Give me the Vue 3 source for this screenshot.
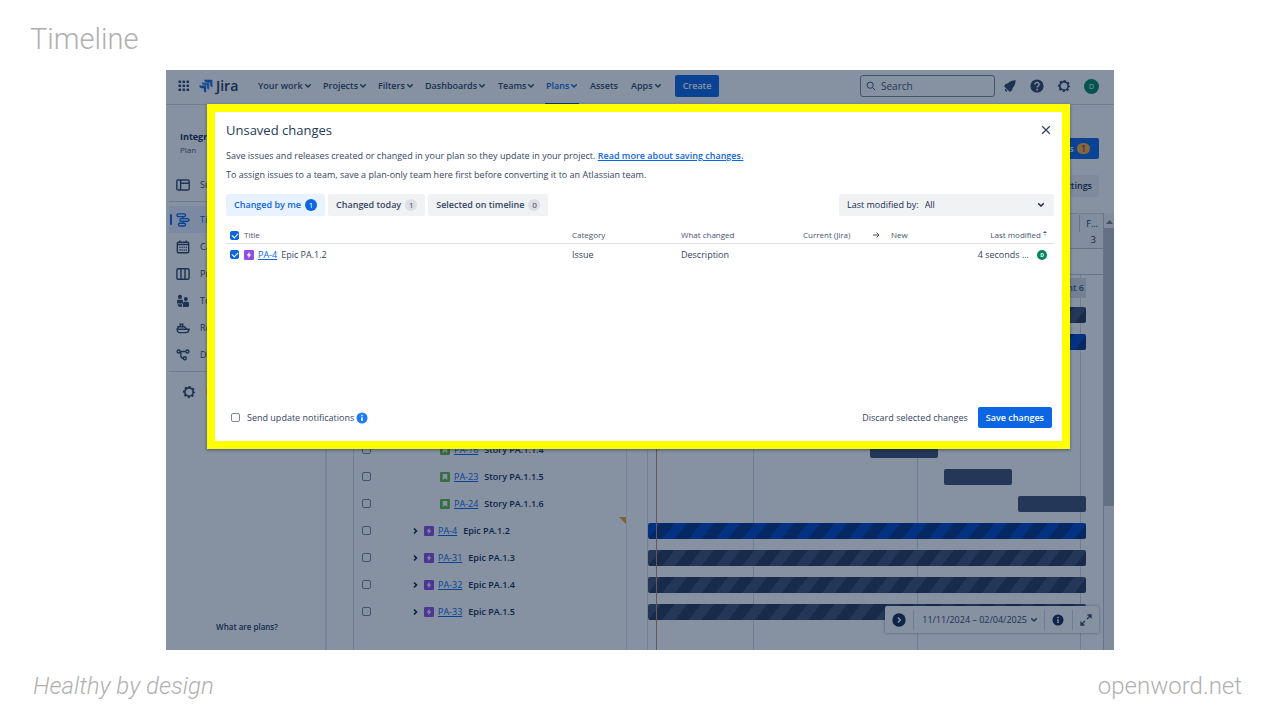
<script setup>
import { ref } from 'vue'

const nav = ['Your work', 'Projects', 'Filters', 'Dashboards', 'Teams', 'Plans', 'Assets', 'Apps']
const side = [
  { name: 'Timeline', icon: 'timeline', active: true },
  { name: 'Calendar', icon: 'calendar' },
  { name: 'Program', icon: 'board' },
  { name: 'Teams', icon: 'teams' },
  { name: 'Releases', icon: 'ship' },
  { name: 'Dependencies', icon: 'deps' },
]
const issues = [
  { type: 'story', key: 'PA-16', title: 'Story PA.1.1.4' },
  { type: 'story', key: 'PA-23', title: 'Story PA.1.1.5' },
  { type: 'story', key: 'PA-24', title: 'Story PA.1.1.6' },
  { type: 'epic', key: 'PA-4', title: 'Epic PA.1.2', changed: true },
  { type: 'epic', key: 'PA-31', title: 'Epic PA.1.3' },
  { type: 'epic', key: 'PA-32', title: 'Epic PA.1.4' },
  { type: 'epic', key: 'PA-33', title: 'Epic PA.1.5' },
]
const bars = [
  { start: 0, span: 438, look: 'grey striped' },
  { start: 0, span: 438, look: 'blue striped' },
  null, null, null,
  { start: 222, span: 68, look: 'grey' },
  { start: 296, span: 68, look: 'grey' },
  { start: 370, span: 68, look: 'grey' },
  { start: 0, span: 438, look: 'blue striped' },
  { start: 0, span: 438, look: 'grey striped' },
  { start: 0, span: 438, look: 'grey striped' },
  { start: 0, span: 438, look: 'grey striped' },
]
const pct = (n) => (n / 438) * 100 + '%'
const lines = [105, 269, 432]
const tabs = [
  { label: 'Changed by me', count: 1 },
  { label: 'Changed today', count: 1 },
  { label: 'Selected on timeline', count: 0 },
]
const tab = ref(0)
const all = ref(true)
const row = ref(true)
const notify = ref(false)
</script>

<template>
  <div class="slide">
    <h1 class="slide-title">Timeline</h1>

    <div class="screen">
      <header class="topbar">
        <button class="bare apps" aria-label="Switch apps">
          <svg width="12" height="12" viewBox="0 0 12 12" fill="#344563">
            <template v-for="y in 3" :key="y"><rect v-for="x in 3" :key="x" :x="x * 4 - 3.5" :y="y * 4 - 3.5" width="2.6" height="2.6" rx=".6" /></template>
          </svg>
        </button>
        <a href="#" class="logo">
          <svg width="14" height="14" viewBox="0 0 14 14" fill="#1868db">
            <path d="M5 .8H13.400V8.300C11.800 8 11.200 7 11.200 5.600V3.600H9.200C6.800 3.500 5.600 2.600 5 .8Z" />
            <path d="M2.600 3.600H10.300V10.600C8.700 10.200 7.900 9.200 7.900 7.900V6.300H6.100C4.200 6.200 3 5.300 2.600 3.600Z" opacity=".85" />
            <path d="M.1 6.500H7.200V13.500C5.400 13.200 4.800 12.200 4.800 10.900V9.200H2.900C1.300 9.100 .3 8.100 .1 6.500Z" />
          </svg>
          <span>Jira</span>
        </a>
        <nav class="nav">
          <a v-for="n in nav" :key="n" href="#" :class="{ current: n === 'Plans' }">
            {{ n }}<svg v-if="n !== 'Assets'" width="6" height="4" viewBox="0 0 6 4"><path d="M.7.7 3 3 5.300.7" fill="none" stroke="currentColor" stroke-width="1.400" stroke-linecap="round" /></svg>
          </a>
        </nav>
        <button class="create">Create</button>
        <label class="search">
          <svg width="10" height="10" viewBox="0 0 10 10" fill="none" stroke="#44546f"><circle cx="4.200" cy="4.200" r="3.100" /><path d="M6.500 6.500 9.200 9.200" /></svg>
          <input type="text" placeholder="Search" aria-label="Search" />
        </label>
        <div class="tools">
          <button class="bare" aria-label="Notifications">
            <svg width="14" height="14" viewBox="0 0 14 14" fill="#344563"><path d="M12.600 1.300C9.500 1.200 7 2.200 4.900 4.200L2.300 5.300 1.200 7.600 6.800 12.900 8.900 11.600 9.700 8.900C11.600 6.800 12.700 4.400 12.600 1.300Z" /><path d="M2 9.600 4.600 12C3.400 13.200 1.300 12.200 2 9.600Z" /></svg>
          </button>
          <button class="bare" aria-label="Help">
            <svg width="14" height="14" viewBox="0 0 14 14"><circle cx="7" cy="7" r="6.600" fill="#344563" /><path d="M4.900 5.600C4.900 2.800 9.200 2.900 9.200 5.500 9.200 7 7.100 7 7.100 8.600" fill="none" stroke="#fff" stroke-width="1.400" /><circle cx="7.100" cy="10.500" r=".9" fill="#fff" /></svg>
          </button>
          <button class="bare" aria-label="Settings">
            <svg width="14" height="14" viewBox="0 0 14 14" fill="none" stroke="#344563"><circle cx="7" cy="7" r="4.200" stroke-width="1.700" /><circle cx="7" cy="7" r="5.300" stroke-width="1.600" stroke-dasharray="2.080 2.080" stroke-dashoffset="1.040" /></svg>
          </button>
          <button class="avatar" aria-label="Your profile">D</button>
        </div>
      </header>

      <div class="body">
        <aside class="sidebar">
          <div class="plan"><strong>Integra</strong><span>Plan</span></div>
          <a href="#" class="side-item"><svg class="ico" viewBox="0 0 14 14" fill="none" stroke="#344563" stroke-width="1.400"><rect x=".8" y="2" width="12.400" height="10" rx="1.300" /><path d="M4.600 2V12M4.600 5.200H13" /></svg>Summary</a>
          <hr />
          <a v-for="s in side" :key="s.name" href="#" class="side-item" :class="{ active: s.active }">
            <svg class="ico" viewBox="0 0 14 14" fill="none" stroke="currentColor" stroke-width="1.400">
              <template v-if="s.icon === 'timeline'"><rect x="1" y=".9" width="8.500" height="2.700" rx="1.300" /><rect x="4" y="5.600" width="9" height="2.700" rx="1.300" /><rect x="2.500" y="10.300" width="7" height="2.700" rx="1.300" /><path d="M7 3.600V5.600M7 8.300V10.300" /></template>
              <template v-else-if="s.icon === 'calendar'"><rect x="1.300" y="2.300" width="11.400" height="10.500" rx="1" /><path d="M1.300 4.500H12.700M3.800.6V3M10.200.6V3" /><path d="M3.400 7.400H11M3.400 10H11" stroke-dasharray="1.200 .9" /></template>
              <template v-else-if="s.icon === 'board'"><rect x=".9" y="1.700" width="12.200" height="10.600" rx="1.300" /><path d="M5 1.700V12.300M9 1.700V12.300" /></template>
              <g v-else-if="s.icon === 'teams'" fill="currentColor" stroke="none"><circle cx="4" cy="2.900" r="2.100" /><circle cx="9.800" cy="4.900" r="2" /><path d="M1 7Q1 5.700 2.300 5.700H6Q7 5.700 7 7V9.500H1ZM6.900 12.900V9.400Q6.900 7.800 8.500 7.800H11.400Q13 7.800 13 9.400V11.600Q13 12.900 11.700 12.900Z" /><path d="M1.600 10.300H6V12.800H3Q1.600 12.500 1.600 10.300Z" /></g>
              <template v-else-if="s.icon === 'ship'"><path d="M1 8.300H13Q12.800 11.600 10 11.600H3Q1.200 11 1 8.300Z" /><path d="M2 8V5.800H8.500L10.500 8M4.200 5.500V3.300H6.800V5.500" /></template>
              <template v-else><circle cx="2.600" cy="3.500" r="1.500" /><circle cx="11.400" cy="3.500" r="1.500" /><circle cx="8.800" cy="10.300" r="1.500" /><path d="M4.100 3.500H9.900M4.800 3.500V7.600Q4.800 10.300 7.300 10.300" /></template>
            </svg>{{ s.name }}
          </a>
          <hr />
          <a href="#" class="side-item settings"><svg class="ico" viewBox="0 0 14 14" fill="none" stroke="#344563"><circle cx="7" cy="7" r="4.200" stroke-width="1.700" /><circle cx="7" cy="7" r="5.300" stroke-width="1.600" stroke-dasharray="2.080 2.080" stroke-dashoffset="1.040" /></svg>Plan settings</a>
          <a href="#" class="what">What are plans?</a>
        </aside>

        <main class="main">
          <div class="actions">
            <button class="review">Review changes <i>1</i></button>
            <button class="view">View settings</button>
          </div>
          <div class="board">
            <div class="tree">
              <div v-for="i in issues" :key="i.key" class="issue" :class="[i.type, { changed: i.changed }]">
                <input type="checkbox" class="box" :aria-label="'Select ' + i.key" />
                <button v-if="i.type === 'epic'" class="bare expand" :aria-label="'Expand ' + i.key"><svg width="5" height="8" viewBox="0 0 5 8"><path d="M1 1.500 3.500 4 1 6.500" fill="none" stroke="#091e42" stroke-width="1.600" /></svg></button>
                <svg v-if="i.type === 'epic'" width="10" height="10" viewBox="0 0 10 10"><rect width="10" height="10" rx="1.300" fill="#904ee2" /><path d="M5.600 1.800 2.700 5.400H4.600L4.300 8.200 7.300 4.600H5.400Z" fill="#fff" /></svg>
                <svg v-else width="10" height="10" viewBox="0 0 10 10"><rect width="10" height="10" rx="1.300" fill="#63ba3c" /><path d="M2.700 2H7.300V8L5 6.200 2.700 8Z" fill="#fff" /></svg>
                <a href="#">{{ i.key }}</a><b>{{ i.title }}</b>
              </div>
            </div>
            <div class="gantt">
              <div class="months"><span>F...</span></div>
              <div class="days"><span>3</span></div>
              <div class="blank"></div>
              <div class="plot">
                <div class="grid-lines">
                  <i v-for="l in lines" :key="l" :style="{ left: pct(l) }"></i>
                  <i class="today" :style="{ left: pct(8) }"></i>
                </div>
                <div class="sprints"><span>Increment 6</span></div>
                <div v-for="(b, n) in bars" :key="n" class="lane">
                  <div v-if="b" class="bar" :class="b.look" :style="{ marginLeft: pct(b.start), width: pct(b.span) }"></div>
                </div>
              </div>
            </div>
            <div class="scroll">
              <svg width="7" height="4" viewBox="0 0 7 4"><path d="M0 4 3.500 0 7 4Z" fill="#7a7f8c" /></svg>
              <div class="thumb"></div>
            </div>
          </div>
        </main>
      </div>

      <div class="range">
        <button class="bare" aria-label="Scroll to today"><svg width="14" height="14" viewBox="0 0 14 14"><circle cx="7" cy="7" r="6.700" fill="#172b4d" /><path d="M5.900 4.500 8.400 7 5.900 9.500" fill="none" stroke="#fff" stroke-width="1.500" /></svg></button>
        <button class="bare dates">11/11/2024 – 02/04/2025 <svg width="6" height="4" viewBox="0 0 6 4"><path d="M.7.7 3 3 5.300.7" fill="none" stroke="currentColor" stroke-width="1.400" stroke-linecap="round" /></svg></button>
        <button class="bare" aria-label="Legend"><svg width="12" height="12" viewBox="0 0 12 12"><circle cx="6" cy="6" r="5.500" fill="#172b4d" /><path d="M6 5.200V9M6 2.800V4.200" stroke="#fff" stroke-width="1.500" /></svg></button>
        <button class="bare" aria-label="Full screen"><svg width="12" height="12" viewBox="0 0 12 12" fill="none" stroke="#344563" stroke-width="1.300"><path d="M7 5 11 1M7.500 1H11V4.500M5 7 1 11M1 7.500V11H4.500" /></svg></button>
      </div>

      <div class="blanket"></div>

      <section class="dialog" role="dialog" aria-labelledby="dlg-title">
        <div class="dlg-head">
          <h2 id="dlg-title">Unsaved changes</h2>
          <button class="bare" aria-label="Close"><svg width="10" height="10" viewBox="0 0 10 10"><path d="M1.200 1.200 8.800 8.800M8.800 1.200 1.200 8.800" stroke="#344563" stroke-width="1.300" /></svg></button>
        </div>
        <p>Save issues and releases created or changed in your plan so they update in your project. <a href="#">Read more about saving changes.</a></p>
        <p>To assign issues to a team, save a plan-only team here first before converting it to an Atlassian team.</p>
        <div class="filters">
          <button v-for="(t, n) in tabs" :key="t.label" class="tab" :class="{ on: tab === n }" @click="tab = n">{{ t.label }}<i>{{ t.count }}</i></button>
          <div class="modified">
            <label for="by">Last modified by:</label>
            <select id="by"><option>All</option></select>
            <svg width="6" height="4" viewBox="0 0 6 4"><path d="M.7.7 3 3 5.300.7" fill="none" stroke="#172b4d" stroke-width="1.500" stroke-linecap="round" /></svg>
          </div>
        </div>
        <div class="changes">
          <table>
            <colgroup><col class="c1" /><col class="c2" /><col class="c3" /><col class="c4" /><col class="c5" /><col class="c6" /><col /></colgroup>
            <thead>
              <tr>
                <th><input v-model="all" type="checkbox" class="box" aria-label="Select all" /></th>
                <th>Title</th><th>Category</th><th>What changed</th><th>Current (Jira)</th>
                <th><svg width="7" height="6" viewBox="0 0 7 6" fill="none" stroke="#44546f"><path d="M0 3H6M3.500.5 6 3 3.500 5.500" /></svg></th>
                <th>New</th>
                <th class="end">Last modified <svg width="4" height="6" viewBox="0 0 4 6" fill="#44546f"><path d="M0 2 2 0 4 2ZM1 3.500H3L2 4.500Z" /></svg></th>
              </tr>
            </thead>
            <tbody>
              <tr>
                <td><input v-model="row" type="checkbox" class="box" aria-label="Select PA-4" /></td>
                <td><span class="cell"><svg width="10" height="10" viewBox="0 0 10 10"><rect width="10" height="10" rx="1.300" fill="#904ee2" /><path d="M5.600 1.800 2.700 5.400H4.600L4.300 8.200 7.300 4.600H5.400Z" fill="#fff" /></svg><a href="#">PA-4</a>Epic PA.1.2</span></td>
                <td>Issue</td><td>Description</td><td></td><td></td><td></td>
                <td class="end"><span class="cell who">4 seconds ...<span class="avatar tiny">D</span></span></td>
              </tr>
            </tbody>
          </table>
        </div>
        <footer class="dlg-foot">
          <label><input v-model="notify" type="checkbox" class="box" />Send update notifications</label>
          <svg width="12" height="12" viewBox="0 0 12 12"><circle cx="6" cy="6" r="5.500" fill="#1d7afc" /><path d="M6 5.200V9M6 2.800V4.200" stroke="#fff" stroke-width="1.500" /></svg>
          <button class="bare discard">Discard selected changes</button>
          <button class="save">Save changes</button>
        </footer>
      </section>
    </div>

    <footer class="slide-foot"><em>Healthy by design</em><span>openword.net</span></footer>
  </div>
</template>

<style>
body { background: #fff; }
</style>

<style scoped>
* { box-sizing: border-box; }
.slide { min-height: 100vh; display: flex; flex-direction: column; font-family: "Open Sans", "Noto Sans", sans-serif; font-size: 9px; line-height: 14px; color: #172b4d; }
.slide-title { margin: 0; height: 70px; padding: 21px 30px; font: 300 29px/36px Roboto, sans-serif; color: #b0b0b0; }
.slide-foot { height: 70px; padding: 18px 38px 0 33px; display: flex; justify-content: space-between; font: 300 24px/36px Roboto, sans-serif; color: #b0b0b0; }
.screen { position: relative; flex: 1; margin: 0 166px; display: flex; flex-direction: column; background: #fff; overflow: hidden; }
button { font: inherit; color: inherit; border: 0; padding: 0; white-space: nowrap; cursor: pointer; }
.bare { background: none; display: flex; align-items: center; }
a { color: #0c66e4; }
svg { flex: none; display: block; }

.topbar { display: flex; align-items: center; height: 35px; padding: 0 15px 2px 12px; border-bottom: 1px solid #d5d9e0; }
.logo { display: flex; align-items: center; gap: 3px; margin-left: 9px; width: 59px; text-decoration: none; color: #253858; font-size: 14px; font-weight: 600; }
.nav { display: grid; grid-template-columns: 65px 55px 47px 73px 48px 44px 41px 44px; height: 35px; margin-top: 2px; }
.nav a { position: relative; display: flex; align-items: center; gap: 2px; color: #344563; font-weight: 600; text-decoration: none; white-space: nowrap; padding-bottom: 3px; }
.nav .current { color: #0c66e4; }
.nav .current::after { content: ""; position: absolute; left: -1px; right: 11px; bottom: 0; height: 2px; background: #0052cc; }
.create { width: 44px; height: 22px; border-radius: 2px; background: #0c66e4; color: #fff; font-weight: 600; }
.search { display: flex; align-items: center; gap: 5px; width: 135px; height: 22px; padding: 0 5px; margin-left: auto; border: 1px solid #7a869a; border-radius: 3px; font-size: 10px; }
.search input { border: 0; padding: 0; min-width: 0; width: 100%; background: none; font: inherit; outline: 0; }
.search input::placeholder { color: #44546f; opacity: 1; }
.tools { display: flex; align-items: center; gap: 13px; margin-left: 8px; }
.avatar { width: 15px; height: 15px; border-radius: 50%; background: #00875a; color: #fff; font-size: 7px; line-height: 15px; text-align: center; }
.tiny { width: 10px; height: 10px; font-size: 5px; line-height: 10px; font-weight: 700; }

.body { flex: 1; display: flex; }
.sidebar { width: 161px; padding: 25px 0 0 3px; border-right: 2px solid #e4e6ea; display: flex; flex-direction: column; }
.plan { display: flex; flex-direction: column; padding-left: 11px; height: 41px; }
.plan strong { line-height: 14px; font-weight: 700; }
.plan span { font-size: 8px; line-height: 12px; color: #44546f; }
.side-item { display: flex; align-items: center; gap: 10px; height: 27px; padding-left: 7px; color: #344563; text-decoration: none; white-space: nowrap; }
.ico { width: 14px; height: 14px; }
.active { position: relative; background: #e9f2ff; color: #0c66e4; }
.active::before { content: ""; position: absolute; left: 1px; top: 8px; width: 2px; height: 11px; background: #0c66e4; border-radius: 1px; }
hr { width: 100%; margin: 3px 0 4px; border: 0; border-top: 1px solid #d0d4db; }
.settings { padding-left: 13px; margin-top: 2px; }
.what { margin: auto 0 16px; text-align: center; font-size: 8px; font-weight: 600; color: #253858; text-decoration: none; }

.main { flex: 1; min-width: 0; display: flex; flex-direction: column; }
.actions { height: 108px; padding: 33px 15px 0 0; display: flex; flex-direction: column; align-items: flex-end; gap: 16px; }
.review { height: 21px; padding: 0 9px; border-radius: 2px; background: #0c66e4; color: #fff; font-weight: 600; }
.review i { display: inline-block; width: 13px; line-height: 11px; margin-left: 1px; border-radius: 6px; background: #ffab3d; color: #172b4d; font-style: normal; font-weight: 400; }
.view { height: 22px; padding: 0 7px; border-radius: 2px; background: #f1f2f4; font-weight: 600; }
.board { flex: 1; display: flex; padding-left: 26px; }
.tree { width: 274px; border-left: 1px solid #d5d9e0; border-right: 1px solid #e4e6ea; padding-top: 223px; }
.issue { position: relative; display: flex; align-items: center; height: 27px; padding-left: 8px; white-space: nowrap; }
.issue > a { margin: 0 6px 0 4px; font-size: 9px; }
.issue b { font-weight: 600; color: #172b4d; }
.box { appearance: none; position: relative; width: 9px; height: 9px; margin: 0; border: 1px solid #7a869a; border-radius: 2px; background: #fff; flex: none; }
.story .box { margin-right: 69px; }
.epic .box { margin-right: 42px; }
.expand { margin-right: 6px; }
.changed::after { content: ""; position: absolute; right: 0; top: 0; border-top: 7px solid #f5a623; border-left: 7px solid transparent; }
.gantt { flex: 1; margin-left: 20px; border-left: 1px solid #dcdfe4; }
.months, .days { height: 18px; padding-right: 5px; text-align: right; background: #f7f8f9; line-height: 19px; }
.months { border-top: 1px solid #d0d4db; }
.months span { display: inline-block; padding-left: 6px; border-left: 1px solid #c1c7d0; line-height: 17px; }
.days { border-bottom: 1px solid #c1c7d0; padding-right: 7px; line-height: 17px; }
.blank { height: 26px; border-bottom: 1px solid #c1c7d0; }
.plot { position: relative; isolation: isolate; height: 375px; padding-right: 17px; }
.grid-lines { position: absolute; inset: 0 17px 0 0; }
.grid-lines i { position: absolute; top: 0; bottom: 0; width: 1px; background: #d5d9e0; }
.grid-lines .today { background: #c98a70; z-index: 1; }
.sprints { position: relative; height: 26px; display: flex; justify-content: flex-end; padding: 3px 0; }
.sprints span { line-height: 20px; padding: 0 2px; background: #dcdfe4; font-weight: 600; color: #44546f; }
.lane { height: 27px; padding-top: 6px; }
.bar { position: relative; height: 16px; border-radius: 2px; }
.grey { background-color: #3f4f70; }
.blue { background-color: #0145c0; }
.striped { background-image: repeating-linear-gradient(128deg, transparent 0 10px, rgba(9, 20, 40, .4) 10px 21px); }
.scroll { width: 11px; padding-top: 7px; border-left: 1px solid #c1c7d0; background: #f4f5f7; display: flex; flex-direction: column; align-items: center; gap: 4px; }
.thumb { width: 100%; height: 278px; background: #bdbfc6; }

.range { position: absolute; right: 15px; bottom: 17px; display: flex; align-items: center; height: 27px; background: #fff; border-radius: 2px; box-shadow: 0 0 3px rgba(9, 30, 66, .45); }
.range button { height: 20px; padding: 0 7px; border-left: 1px solid #d5d9e0; }
.range button:first-child { border-left: 0; }
.range .dates { padding: 0 7px 0 8px; gap: 4px; color: #344563; font-weight: 500; }
.range button:nth-child(3) { padding: 0 8px 0 7px; }
.blanket { position: absolute; inset: 0; background: rgba(9, 30, 66, .49); }

.dialog { position: absolute; top: 34px; left: 41px; right: 44px; padding: 9px 8px 13px 11px; border: 8px solid #ff0; background: #fff; box-shadow: 0 1px 3px rgba(9, 30, 66, .5); display: flex; flex-direction: column; }
.dlg-head { display: flex; justify-content: space-between; align-items: center; height: 18px; margin-bottom: 8px; padding-right: 3px; }
h2 { margin: 0; font-size: 13px; line-height: 18px; font-weight: 500; color: #253858; }
p { margin: 0 0 1px; line-height: 18px; color: #344563; white-space: nowrap; }
p a { font-weight: 600; }
.filters { display: flex; gap: 3px; margin-top: 9px; }
.tab { display: flex; align-items: center; gap: 4px; height: 22px; padding: 0 8px; border-radius: 2px; background: #f1f2f4; font-weight: 600; color: #344563; }
.tab i { min-width: 12px; border-radius: 6px; background: #dcdfe4; font-style: normal; font-weight: 400; font-size: 8px; line-height: 12px; text-align: center; }
.on { background: #e9f2ff; color: #0c66e4; }
.on i { background: #0c66e4; color: #fff; }
.modified { position: relative; display: flex; align-items: center; width: 215px; height: 22px; margin-left: auto; padding: 0 10px 0 8px; gap: 6px; border-radius: 2px; background: #f1f2f4; font-weight: 500; }
select { flex: 1; appearance: none; border: 0; padding: 0; background: none; font: inherit; color: inherit; }
.changes { min-height: 191px; padding-top: 10px; }
table { width: 100%; table-layout: fixed; border-collapse: collapse; white-space: nowrap; color: #344563; }
.c1 { width: 18px; } .c2 { width: 328px; } .c3 { width: 109px; } .c4 { width: 122px; } .c5 { width: 70px; } .c6 { width: 18px; }
th, td { padding: 0; text-align: left; vertical-align: middle; }
th { height: 17px; padding-top: 1px; font-size: 8px; line-height: 16px; font-weight: 500; color: #44546f; border-bottom: 1px solid #dcdfe4; }
td { height: 22px; }
th .box, td .box { display: block; margin-left: 4px; }
.box:checked { background: #0c66e4; border-color: #0c66e4; }
.box:checked::after { content: ""; position: absolute; left: 2px; top: 0; width: 3px; height: 5px; border: solid #fff; border-width: 0 1px 1px 0; transform: rotate(45deg); }
.end { text-align: right; padding-right: 7px; }
.end svg { display: inline-block; vertical-align: 1px; }
.cell { display: flex; align-items: center; gap: 4px; }
.who { justify-content: flex-end; gap: 8px; }
.dlg-foot { display: flex; align-items: center; height: 21px; padding-right: 2px; color: #344563; }
.dlg-foot label { display: flex; align-items: center; gap: 7px; margin: 0 2px 0 5px; }
.discard { margin-left: auto; margin-right: 10px; font-weight: 500; }
.save { height: 21px; padding: 0 8px; border-radius: 2px; background: #0c66e4; color: #fff; font-weight: 600; }
</style>
